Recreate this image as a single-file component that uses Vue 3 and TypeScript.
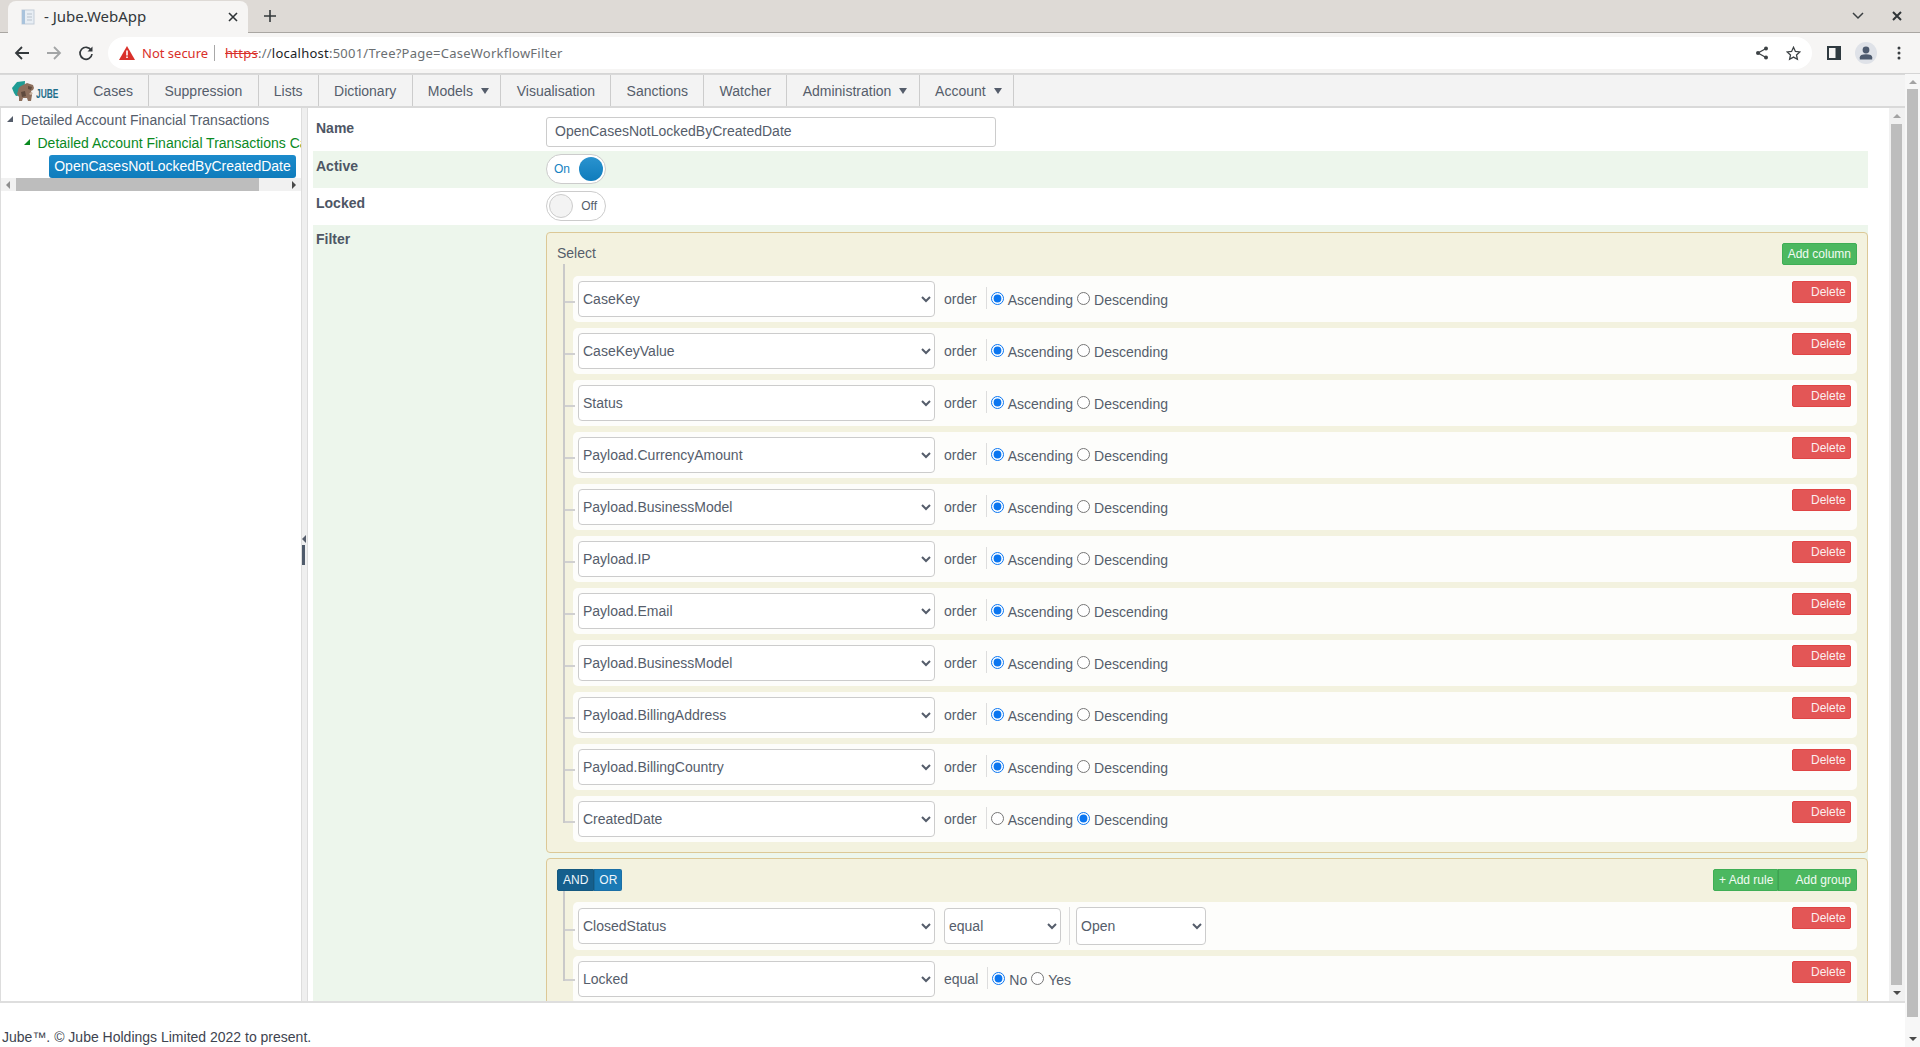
<script setup lang="ts">
const menu = [
  { label: 'Cases' },
  { label: 'Suppression' },
  { label: 'Lists' },
  { label: 'Dictionary' },
  { label: 'Models', caret: true },
  { label: 'Visualisation' },
  { label: 'Sanctions' },
  { label: 'Watcher' },
  { label: 'Administration', caret: true },
  { label: 'Account', caret: true },
]

const columns = [
  { name: 'CaseKey', desc: false },
  { name: 'CaseKeyValue', desc: false },
  { name: 'Status', desc: false },
  { name: 'Payload.CurrencyAmount', desc: false },
  { name: 'Payload.BusinessModel', desc: false },
  { name: 'Payload.IP', desc: false },
  { name: 'Payload.Email', desc: false },
  { name: 'Payload.BusinessModel', desc: false },
  { name: 'Payload.BillingAddress', desc: false },
  { name: 'Payload.BillingCountry', desc: false },
  { name: 'CreatedDate', desc: true },
]
</script>

<template>
  <div class="app">
    <div class="tabstrip">
      <div class="tab">
        <svg class="favicon" width="16" height="16" viewBox="0 0 16 16">
          <rect x="2" y="1" width="12" height="14" fill="#e8eef4" stroke="#c3cdd8" />
          <rect x="2" y="1" width="3" height="14" fill="#a9c3dc" />
          <path d="M7 5h5M7 8h5M7 11h5" stroke="#b9c2cc" />
        </svg>
        <span class="tab-title">- Jube.WebApp</span>
        <svg class="tab-close" width="10" height="10" viewBox="0 0 10 10">
          <path d="M1 1l8 8M9 1l-8 8" stroke="#2f3437" stroke-width="1.6" />
        </svg>
      </div>
      <svg class="tab-new" width="14" height="14" viewBox="0 0 14 14">
        <path d="M7 1v12M1 7h12" stroke="#33383b" stroke-width="1.6" />
      </svg>
      <svg class="win-btn" width="14" height="10" viewBox="0 0 14 10">
        <path d="M2 2l5 5 5-5" fill="none" stroke="#3a3f42" stroke-width="1.5" />
      </svg>
      <svg class="win-close" width="10" height="10" viewBox="0 0 10 10">
        <path d="M1 1l8 8M9 1l-8 8" stroke="#2f3437" stroke-width="2" />
      </svg>
    </div>

    <div class="toolbar">
      <svg class="nav back" width="16" height="16" viewBox="0 0 16 16">
        <path d="M15 8H2M8 2L2 8l6 6" fill="none" stroke="#34393c" stroke-width="1.8" />
      </svg>
      <svg class="nav fwd" width="16" height="16" viewBox="0 0 16 16">
        <path d="M1 8h13M8 2l6 6-6 6" fill="none" stroke="#a3a5a6" stroke-width="1.8" />
      </svg>
      <svg class="nav reload" width="16" height="16" viewBox="0 0 16 16">
        <path d="M13.2 5.2A6 6 0 1 0 14 9" fill="none" stroke="#34393c" stroke-width="1.7" />
        <path d="M14.5 1.5v5h-5z" fill="#34393c" />
      </svg>
      <div class="omnibox">
        <svg width="16" height="14" viewBox="0 0 16 14">
          <path d="M8 0l8 14H0z" fill="#d9302a" />
          <path d="M7.2 4.5h1.6v5H7.2zM7.2 10.5h1.6v1.6H7.2z" fill="#fff" />
        </svg>
        <span class="not-secure">Not secure</span>
        <span class="omni-sep"></span>
        <span class="url"><s class="scheme">https</s><span class="dim">://</span><span class="host">localhost</span><span class="dim">:5001/Tree?Page=CaseWorkflowFilter</span></span>
        <svg class="omni-share" width="14" height="14" viewBox="0 0 14 14">
          <path d="M11 2.5L3 7l8 4.5" fill="none" stroke="#3d4245" stroke-width="1.3" />
          <circle cx="11" cy="2.5" r="2" fill="#3d4245" />
          <circle cx="3" cy="7" r="2" fill="#3d4245" />
          <circle cx="11" cy="11.5" r="2" fill="#3d4245" />
        </svg>
        <svg class="omni-star" width="15" height="15" viewBox="0 0 15 15">
          <path d="M7.5 1.3l1.9 4.1 4.4.5-3.3 3 .9 4.4-3.9-2.2-3.9 2.2.9-4.4-3.3-3 4.4-.5z" fill="none" stroke="#3d4245" stroke-width="1.3" />
        </svg>
      </div>
      <svg class="side-panel" width="14" height="14" viewBox="0 0 14 14">
        <rect width="14" height="14" fill="#2f3a40" />
        <rect x="2" y="2" width="6.5" height="10" fill="#f6f5f4" />
      </svg>
      <div class="avatar">
        <svg width="14" height="14" viewBox="0 0 14 14">
          <circle cx="7" cy="4" r="3.4" fill="#4d5a6e" />
          <path d="M0.8 13.5v-2.2c0-2 2-3 6.2-3s6.2 1 6.2 3v2.2z" fill="#4d5a6e" />
        </svg>
      </div>
      <svg class="kebab" width="4" height="14" viewBox="0 0 4 14">
        <circle cx="2" cy="2" r="1.5" fill="#3a3f42" />
        <circle cx="2" cy="7" r="1.5" fill="#3a3f42" />
        <circle cx="2" cy="12" r="1.5" fill="#3a3f42" />
      </svg>
    </div>

    <div class="page">
      <div class="page-main">
        <nav class="menu">
          <div class="logo">
            <svg width="26" height="22" viewBox="0 0 26 22">
              <path d="M1 8L6 2l8-1-1 14-8 1-2-3z" fill="#1f9c94" />
              <path d="M7 11c0-3 2-5 5-6l4-2 3 1 3 1 1 3-1 2-2 1 1 4-1 6h-3l-1-3-4 0-1 3h-3l0-4-2-3z" fill="#8d6f5c" />
              <path d="M17 6l4 1-1 3-3-1zM10 12l4-1 1 5-4 1z" fill="#5f4a3d" />
              <path d="M20 12l2 1-2 2-2-1z" fill="#c9b3a2" />
            </svg>
            <span class="logo-text">JUBE</span>
          </div>
          <div v-for="m in menu" :key="m.label" class="menu-item" :class="{ drop: m.caret }">
            {{ m.label }}<span v-if="m.caret" class="caret"></span>
          </div>
        </nav>

        <div class="body">
          <aside class="tree">
            <div class="tree-list">
              <div class="node lvl0"><span class="arrow"></span>Detailed Account Financial Transactions</div>
              <div class="node lvl1"><span class="arrow green"></span>Detailed Account Financial Transactions Case Workflow</div>
              <div class="node-selected">OpenCasesNotLockedByCreatedDate</div>
            </div>
            <div class="tree-scroll">
              <span class="tri-left"></span>
              <span class="tree-thumb"></span>
              <span class="tri-right"></span>
            </div>
          </aside>

          <div class="splitter">
            <span class="split-arrow"></span>
            <span class="split-grip"></span>
          </div>

          <main class="content">
            <div class="form-row name-row">
              <label>Name</label>
              <input class="text-input" value="OpenCasesNotLockedByCreatedDate" />
            </div>
            <div class="form-row switch-row shaded">
              <label>Active</label>
              <div class="toggle on"><span class="toggle-text">On</span><span class="knob"></span></div>
            </div>
            <div class="form-row switch-row">
              <label>Locked</label>
              <div class="toggle"><span class="knob"></span><span class="toggle-text">Off</span></div>
            </div>
            <div class="form-row filter-row shaded">
              <label>Filter</label>
              <div class="panels">
                <section class="panel">
                  <header class="panel-head">
                    <span class="panel-title">Select</span>
                    <button class="btn green">Add column</button>
                  </header>
                  <div class="rules">
                    <div v-for="(c, i) in columns" :key="i" class="rule">
                      <select class="sel sel-main"><option>{{ c.name }}</option></select>
                      <span class="word">order</span>
                      <span class="sep"></span>
                      <input type="radio" class="radio" :name="'o' + i" :checked="!c.desc" />
                      <span class="radio-label">Ascending</span>
                      <input type="radio" class="radio" :name="'o' + i" :checked="c.desc" />
                      <span class="radio-label">Descending</span>
                      <button class="btn red">Delete</button>
                    </div>
                  </div>
                </section>

                <section class="panel">
                  <header class="panel-head">
                    <div class="btn-group">
                      <button class="btn blue active">AND</button>
                      <button class="btn blue or">OR</button>
                    </div>
                    <div class="btn-group">
                      <button class="btn green add-rule">+ Add rule</button>
                      <button class="btn green add-group">Add group</button>
                    </div>
                  </header>
                  <div class="rules">
                    <div class="rule tall first-tall">
                      <select class="sel sel-main"><option>ClosedStatus</option></select>
                      <select class="sel sel-op"><option>equal</option></select>
                      <span class="sep sep-high"></span>
                      <select class="sel sel-val"><option>Open</option></select>
                      <button class="btn red">Delete</button>
                    </div>
                    <div class="rule tall">
                      <select class="sel sel-main"><option>Locked</option></select>
                      <span class="word">equal</span>
                      <span class="sep"></span>
                      <input type="radio" class="radio" name="locked" checked />
                      <span class="radio-label">No</span>
                      <input type="radio" class="radio" name="locked" />
                      <span class="radio-label">Yes</span>
                      <button class="btn red">Delete</button>
                    </div>
                  </div>
                </section>
              </div>
            </div>
          </main>

          <div class="vscroll inner">
            <span class="tri-up"></span>
            <span class="vthumb"></span>
            <span class="tri-down"></span>
          </div>
        </div>

        <footer class="footer">Jube™. © Jube Holdings Limited 2022 to present.</footer>
      </div>

      <div class="vscroll outer">
        <span class="tri-up"></span>
        <span class="vthumb"></span>
        <span class="tri-down"></span>
      </div>
    </div>
  </div>
</template>

<style>
html,
body {
  margin: 0;
  overflow: hidden;
}
</style>

<style scoped>
.app {
  width: 1920px;
  height: 1047px;
  display: flex;
  flex-direction: column;
  overflow: hidden;
  background: #fff;
  font-family: "Liberation Sans", Arial, sans-serif;
  font-size: 14px;
  color: #555d6b;
}

/* browser chrome */
.tabstrip {
  height: 32px;
  flex: none;
  display: flex;
  align-items: center;
  background: #dedad6;
  border-bottom: 1px solid #a9a6a2;
  font-family: "Noto Sans", sans-serif;
}
.tab {
  width: 240px;
  height: 32px;
  margin-left: 8px;
  padding: 0 10px 0 12px;
  box-sizing: border-box;
  display: flex;
  align-items: center;
  background: #f6f5f4;
  border-radius: 8px 8px 0 0;
  margin-bottom: -1px;
}
.favicon {
  margin-right: 8px;
}
.tab-title {
  flex: 1;
  font-size: 15px;
  line-height: 28px;
  padding-bottom: 2px;
  color: #33383b;
}
.tab-new {
  margin-left: 15px;
}
.win-btn {
  margin-left: auto;
  margin-right: 27px;
}
.win-close {
  margin-right: 18px;
}

.toolbar {
  height: 41px;
  flex: none;
  display: flex;
  align-items: center;
  background: #f6f5f4;
  border-bottom: 1px solid #d5d5d5;
  box-sizing: border-box;
}
.nav {
  flex: none;
}
.back {
  margin-left: 14px;
}
.fwd {
  margin-left: 16px;
}
.reload {
  margin-left: 16px;
}
.omnibox {
  width: 1704px;
  height: 32px;
  margin-left: 14px;
  padding: 0 0 0 11px;
  box-sizing: border-box;
  display: flex;
  align-items: center;
  background: #fff;
  border-radius: 16px;
  font-family: "Noto Sans", sans-serif;
  font-size: 13px;
}
.not-secure {
  margin-left: 7px;
  color: #d9302a;
}
.omni-sep {
  width: 1px;
  height: 16px;
  margin: 0 10px 0 6px;
  background: #a8a8a8;
}
.url {
  color: #6b6f72;
  letter-spacing: 0.24px;
}
.scheme {
  color: #d9302a;
}
.host {
  color: #202326;
}
.dim {
  color: #6b6f72;
}
.omni-share {
  margin-left: auto;
}
.omni-star {
  margin-left: 17px;
  margin-right: 11px;
}
.side-panel {
  margin-left: 15px;
}
.avatar {
  width: 22px;
  height: 22px;
  margin-left: 14px;
  border-radius: 50%;
  background: #dfe2e8;
  display: flex;
  align-items: center;
  justify-content: center;
}
.kebab {
  margin-left: 20px;
}

/* page */
.page {
  flex: 1;
  min-height: 0;
  display: flex;
}
.page-main {
  flex: 1;
  min-width: 0;
  display: flex;
  flex-direction: column;
}
.menu {
  height: 34px;
  flex: none;
  display: flex;
  background: #f3f3f3;
  border-bottom: 2px solid #d9d9d9;
  border-top: 1px solid #d9d9d9;
  box-sizing: border-box;
}
.logo {
  width: 78px;
  flex: none;
  box-sizing: border-box;
  padding-left: 11px;
  border-right: 1px solid #ccc;
  display: flex;
  align-items: center;
  overflow: hidden;
}
.logo-text {
  margin-left: -1px;
  margin-top: 6px;
  font-size: 12px;
  font-weight: 700;
  color: #1f6f8b;
  transform: scaleX(0.7);
  transform-origin: left center;
}
.menu-item {
  padding: 0 15.25px;
  display: flex;
  align-items: center;
  border-right: 1px solid #ccc;
  color: #555d6b;
}
.menu-item.drop {
  padding-right: 11.5px;
}
.caret {
  margin-left: 8px;
  border-left: 4px solid transparent;
  border-right: 4px solid transparent;
  border-top: 6px solid #555d6b;
}

.body {
  height: 895px;
  flex: none;
  display: flex;
  border-bottom: 2px solid #dedede;
  box-sizing: border-box;
}
.tree {
  width: 302px;
  flex: none;
  box-sizing: border-box;
  border-left: 1px solid #ddd;
  border-right: 1px solid #ddd;
  overflow: hidden;
}
.tree-list {
  padding-top: 1px;
}
.node {
  height: 23px;
  line-height: 23px;
  white-space: nowrap;
  position: relative;
}
.lvl0 {
  padding-left: 20px;
}
.lvl1 {
  padding-left: 36.5px;
  color: #0a8a1f;
}
.arrow {
  position: absolute;
  top: 7px;
  margin-left: -14px;
  border-left: 6px solid transparent;
  border-bottom: 6px solid #555d6b;
}
.arrow.green {
  border-bottom-color: #0a8a1f;
}
.node-selected {
  width: 247px;
  height: 23px;
  line-height: 23px;
  margin-left: 48px;
  box-sizing: border-box;
  text-align: center;
  color: #fff;
  background: linear-gradient(#1c8bcb, #0f7cbc);
  border-radius: 3px;
  white-space: nowrap;
}
.tree-scroll {
  height: 13px;
  display: flex;
  align-items: center;
  background: #f1f1f1;
  position: relative;
}
.tree-thumb {
  position: absolute;
  left: 15px;
  width: 243px;
  height: 13px;
  background: #bdbdbd;
}
.tri-left {
  position: absolute;
  left: 5px;
  border-top: 4px solid transparent;
  border-bottom: 4px solid transparent;
  border-right: 4px solid #8f8f8f;
}
.tri-right {
  position: absolute;
  right: 5px;
  border-top: 4px solid transparent;
  border-bottom: 4px solid transparent;
  border-left: 4px solid #4a4a4a;
}

.splitter {
  width: 5px;
  flex: none;
  background: #efefef;
  border-right: 1px solid #ddd;
  position: relative;
}
.split-arrow {
  position: absolute;
  left: 0;
  top: 427px;
  border-top: 4px solid transparent;
  border-bottom: 4px solid transparent;
  border-right: 4px solid #555d6b;
}
.split-grip {
  position: absolute;
  left: 0;
  top: 437px;
  width: 3px;
  height: 20px;
  background: #4f5b6b;
}

.content {
  flex: 1;
  min-width: 0;
  height: 893px;
  padding: 0 21px 0 5px;
  overflow: hidden;
}
.form-row {
  display: grid;
  grid-template-columns: 233px 1fr;
}
.form-row label {
  padding-left: 3px;
  font-weight: 700;
  color: #4e5665;
}
.shaded {
  background: #edf6ec;
}
.name-row {
  height: 43px;
  padding-top: 9px;
  box-sizing: border-box;
}
.name-row label {
  padding-top: 3px;
}
.switch-row {
  height: 37px;
  padding-top: 3px;
  box-sizing: border-box;
}
.switch-row label {
  padding-top: 4px;
}
.filter-row {
  padding-top: 7px;
}
.filter-row label {
  margin-top: -1px;
}
.text-input {
  width: 450px;
  height: 30px;
  box-sizing: border-box;
  padding: 0 8px 2px;
  border: 1px solid #ccc;
  border-radius: 3px;
  font: inherit;
  color: #555d6b;
  outline: none;
}
.toggle {
  width: 60px;
  height: 30px;
  box-sizing: border-box;
  padding: 0 2px;
  border: 1px solid #ccc;
  border-radius: 15px;
  background: #fff;
  display: flex;
  align-items: center;
  justify-content: space-between;
  font-size: 12px;
}
.toggle.on {
  padding-left: 7px;
}
.toggle.on .toggle-text {
  color: #1482c2;
}
.toggle .toggle-text {
  padding-right: 6px;
}
.toggle.on .toggle-text {
  padding-right: 0;
}
.toggle .knob {
  width: 24px;
  height: 24px;
  box-sizing: border-box;
  border-radius: 50%;
  background: #f3f3f3;
  border: 1px solid #ccc;
}
.toggle.on .knob {
  background: linear-gradient(#2a93cf, #0f7cbc);
  border: none;
}

.panels {
  display: flex;
  flex-direction: column;
  gap: 5px;
}
.panel {
  border: 1px solid #dcc896;
  border-radius: 4px;
  background: #f3f2df;
  padding: 0 10px 10px 10px;
}
.panel-head {
  height: 43px;
  display: flex;
  align-items: center;
  justify-content: space-between;
  box-sizing: border-box;
  padding-bottom: 2px;
}
.panel-title {
  position: relative;
  top: -1px;
}
.rules {
  display: flex;
  flex-direction: column;
  gap: 6px;
  margin-left: 16px;
  margin-right: 0;
  position: relative;
}
.rule {
  height: 46px;
  box-sizing: border-box;
  padding: 5px 6px 0 5px;
  display: flex;
  align-items: flex-start;
  background: #fdfdfb;
  border-radius: 5px;
  position: relative;
}
.rule.tall {
  height: 48px;
}
.first-tall {
  padding-top: 6px;
}
.first-tall .btn.red {
  margin-top: -1px;
}
.rule::before {
  content: "";
  position: absolute;
  left: -10px;
  top: 25px;
  width: 12px;
  height: 2px;
  background: #d0d0d0;
}
.rule::after {
  content: "";
  position: absolute;
  left: -10px;
  top: -26px;
  width: 2px;
  height: 53px;
  background: #c9c9c9;
}
.rule:first-child::after {
  top: -12px;
  height: 39px;
}
.rule.tall:first-child::before {
  top: 27px;
}
.rule.tall:first-child::after {
  top: -11px;
  height: 40px;
}
.rule.tall:last-child::before {
  top: 23px;
}
.rule.tall:last-child::after {
  top: -27px;
  height: 52px;
}
.sel {
  height: 36px;
  box-sizing: border-box;
  border: 1px solid #ccc;
  border-radius: 4px;
  background: #fff;
  padding: 0;
  font: inherit;
  color: #555d6b;
  outline: none;
}
.sel-main {
  width: 357px;
}
.sel-op {
  width: 117px;
  margin-left: 9px;
}
.sel-val {
  width: 130px;
  height: 38px;
  margin-top: -1px;
}
.word {
  margin-left: 9px;
  line-height: 37px;
}
.sep {
  width: 1px;
  height: 22px;
  margin: 6px 4px 0 9px;
  background: #ddd;
}
.sep-high {
  height: 38px;
  margin: -1px 6px 0 8px;
}
.radio {
  width: 13px;
  height: 13px;
  margin: 11px 4px 0 0;
  flex: none;
  accent-color: #0b76f0;
}
.radio-label {
  margin-right: 4px;
  line-height: 36px;
  position: relative;
  top: 1px;
}
.btn {
  height: 22px;
  box-sizing: border-box;
  padding: 0 5px;
  border: 1px solid #3fae55;
  border-radius: 2px;
  background: #4cb860;
  color: #f2fbf3;
  font: 12px "Liberation Sans", Arial, sans-serif;
}
.btn.red {
  width: 59px;
  margin-left: auto;
  padding: 0 6px 0 18px;
  text-align: right;
  background: #e35656;
  border-color: #e04545;
  color: #fbeeee;
}
.btn.blue {
  background: #1a7ab5;
  border-color: #1a6fa6;
  color: #eef6fb;
}
.btn.blue.active {
  background: #155f8d;
  border-color: #15587f;
}
.btn.blue.or {
  padding: 0 4px;
}
.btn-group {
  display: flex;
}
.btn-group .btn {
  border-radius: 0;
}
.btn-group .btn:first-child {
  border-radius: 2px 0 0 2px;
}
.btn-group .btn:last-child {
  border-radius: 0 2px 2px 0;
  border-left: 1px solid rgba(0, 0, 0, 0.12);
}
.add-rule {
  width: 65px;
  padding: 0 0 0 5px;
  text-align: left;
}
.add-group {
  width: 79px;
  padding: 0 5px 0 0;
  text-align: right;
}

.vscroll {
  flex: none;
  position: relative;
  background: #f1f1f1;
}
.vscroll.inner {
  width: 16px;
  height: 893px;
}
.vscroll.outer {
  width: 15px;
  height: 973px;
  background: #f7f7f7;
}
.tri-up {
  position: absolute;
  left: 4px;
  top: 6px;
  border-left: 4px solid transparent;
  border-right: 4px solid transparent;
  border-bottom: 4px solid #a3a3a3;
}
.tri-down {
  position: absolute;
  left: 4px;
  bottom: 6px;
  border-left: 4px solid transparent;
  border-right: 4px solid transparent;
  border-top: 4px solid #4a4a4a;
}
.vthumb {
  position: absolute;
  background: #bdbdbd;
}
.inner .vthumb {
  left: 2px;
  top: 16px;
  width: 11px;
  bottom: 16px;
}
.outer .vthumb {
  left: 2px;
  top: 15px;
  width: 11px;
  height: 928px;
}

.footer {
  flex: 1;
  padding: 26px 0 0 2px;
  box-sizing: border-box;
  color: #3e444f;
}
</style>
